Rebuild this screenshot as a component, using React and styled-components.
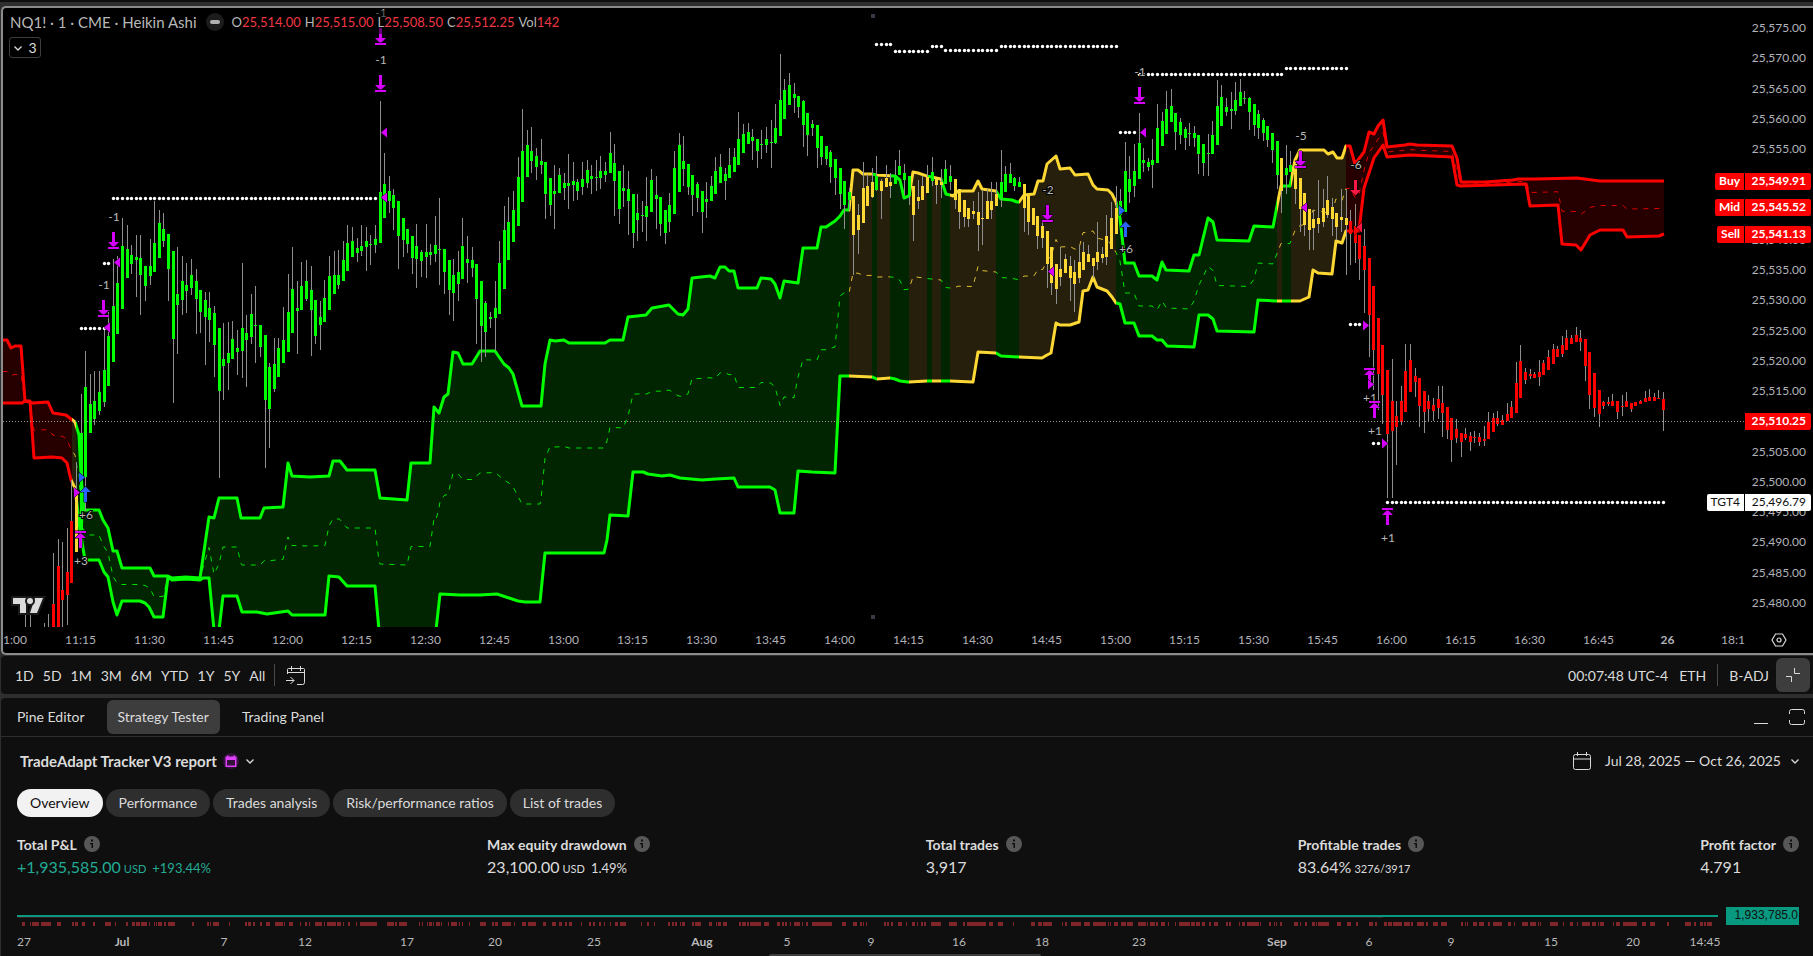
import React from 'react'
import styled, { createGlobalStyle } from 'styled-components'

const GlobalStyle = createGlobalStyle`
    * {
        box-sizing: border-box;
    }
    body {
        margin: 0;
        background: #2e2e2e;
        color: #dbdbdb;
        font-family: Lato, "Liberation Sans", sans-serif;
        font-size: 14px;
        overflow: hidden;
    }
    button {
        font: inherit;
        color: inherit;
        background: none;
        border: 0;
        padding: 0;
        cursor: pointer;
    }
`

const Page = styled.div`
    display: flex;
    flex-direction: column;
    min-height: 100vh;
`
const TopStrip = styled.div`
    height: 2px;
    background: #0f0f0f;
    margin-bottom: 4px;
`
const ChartFrame = styled.section`
    position: relative;
    display: grid;
    grid-template-columns: minmax(0, 1fr) 68px;
    grid-template-rows: 619px 26px;
    margin-left: 1px;
    border: 2px solid #8c8c8c;
    border-right: 0;
    border-radius: 5px 0 0 5px;
    background: #000;
    overflow: hidden;
`
const Plot = styled.svg`
    display: block;
    width: 100%;
    height: 100%;
    overflow: hidden;
`
const PriceAxis = styled.div`
    display: flex;
    flex-direction: column;
    justify-content: space-between;
    align-items: flex-end;
    padding: 12px 7px 16px 0;
    font-size: 12px;
    line-height: 16px;
    color: #b0b2b8;
`
const TimeAxis = styled.div`
    display: flex;
    overflow: hidden;
    font-size: 12px;
    line-height: 26px;
    color: #b0b2b8;
`
const TimeLabel = styled.span`
    flex: none;
    width: 69px;
    text-align: center;
    font-weight: ${props => props.$bold ? 700 : 400};
    &:first-child {
        margin-left: -26px;
    }
`
const AxisButton = styled.button`
    display: flex;
    align-items: center;
    justify-content: center;
`
const PriceTag = styled.div`
    position: absolute;
    right: 2px;
    top: ${props => props.$top}px;
    display: flex;
    gap: 1px;
    font-size: 12px;
    line-height: 16px;
    font-weight: ${props => props.$light ? 400 : 700};
    color: ${props => props.$light ? '#0f0f0f' : '#fff'};
    span {
        background: ${props => props.$light ? '#fff' : '#f00'};
        padding: 0 4px 1px;
        border-radius: 2px 0 0 2px;
    }
    span:last-child {
        width: 66px;
        padding: 0 5px 1px 0;
        text-align: right;
        border-radius: 0 2px 2px 0;
    }
`
const Legend = styled.div`
    position: absolute;
    left: 5px;
    top: 2px;
    display: flex;
    align-items: center;
    height: 24px;
    padding: 0 2px;
    background: rgba(0, 0, 0, 0.5);
    color: #b8b8b8;
    font-size: 13px;
`
const Symbol = styled.span`
    font-size: 15px;
`
const HideButton = styled.button`
    display: flex;
    align-items: center;
    justify-content: center;
    width: 18px;
    height: 18px;
    margin: 0 8px 0 9px;
    border-radius: 50%;
    background: #1c1c1c;
    &:before {
        content: "";
        width: 10px;
        height: 4px;
        border-radius: 2px;
        background: #b0b0b0;
    }
`
const Ohlc = styled.span`
    margin-right: 4px;
    b {
        font-weight: 400;
        color: #f23645;
    }
`
const CountButton = styled.button`
    position: absolute;
    left: 6px;
    top: 29px;
    display: flex;
    align-items: center;
    justify-content: center;
    gap: 5px;
    width: 32px;
    height: 21px;
    border: 1px solid #3d3d3d;
    border-radius: 3px;
    background: #000;
`
const Toolbar = styled.div`
    display: flex;
    align-items: center;
    justify-content: space-between;
    height: 38px;
    margin: 1px 0 4px 1px;
    padding: 0 3px 0 10px;
    border-radius: 4px 0 0 4px;
    background: #0f0f0f;
`
const ToolGroup = styled.div`
    display: flex;
    align-items: center;
    gap: ${props => props.$gap}px;
`
const ToolButton = styled.button`
    display: flex;
    align-items: center;
    height: 28px;
    padding: 0 4px;
`
const Divider = styled.i`
    width: 1px;
    height: 22px;
    margin: 0 4px;
    background: #4a4a4a;
`
const SquareButton = styled.button`
    display: flex;
    align-items: center;
    justify-content: center;
    width: 34px;
    height: 34px;
    border-radius: 6px;
    background: #3d3d3d;
`
const Panel = styled.section`
    display: flex;
    flex-direction: column;
    flex: 1;
    margin-left: 1px;
    border-radius: 4px 0 0 0;
    background: #0f0f0f;
`
const TabBar = styled.div`
    display: flex;
    align-items: center;
    height: 39px;
    padding: 0 7px 0 5px;
    gap: 11px;
    border-bottom: 1px solid #2e2e2e;
`
const Tab = styled.button`
    height: 34px;
    padding: 0 11px 2px;
    border-radius: 6px;
    background: ${props => props.$active ? '#3d3d3d' : 'none'};
`
const PanelButtons = styled.div`
    display: flex;
    gap: 18px;
    margin-left: auto;
    button {
        display: flex;
    }
`
const ReportHeader = styled.div`
    display: flex;
    align-items: center;
    justify-content: space-between;
    height: 47px;
    padding: 0 13px 0 19px;
`
const ReportButton = styled.button`
    display: flex;
    align-items: center;
    gap: 6px;
    font-size: ${props => props.$strong ? 15 : 14}px;
    font-weight: ${props => props.$strong ? 700 : 400};
`
const DateText = styled.span`
    margin: 0 3px 0 7px;
`
const Pills = styled.div`
    display: flex;
    gap: 3px;
    padding: 5px 16px 0;
`
const Pill = styled.button`
    height: 28px;
    padding: 0 13px 2px;
    border-radius: 14px;
    background: ${props => props.$active ? '#f2f2f2' : '#2e2e2e'};
    color: ${props => props.$active ? '#0f0f0f' : '#dbdbdb'};
`
const Stats = styled.div`
    display: flex;
    justify-content: space-between;
    padding: 17px 14px 0 16px;
`
const StatLabel = styled.div`
    display: flex;
    align-items: center;
    gap: 7px;
    height: 20px;
    font-weight: 700;
`
const StatValue = styled.div`
    font-size: 16px;
    line-height: 25px;
    color: ${props => props.$up ? '#22ab94' : '#dbdbdb'};
    small {
        margin-left: 3px;
        font-size: 11px;
        line-height: 1;
    }
    span {
        margin-left: 6px;
        font-size: 13px;
        line-height: 1;
    }
`
const Equity = styled.div`
    position: relative;
    margin-top: 20px;
    height: 57px;
`
const EquityTag = styled.div`
    position: absolute;
    right: 14px;
    top: 8px;
    width: 73px;
    height: 18px;
    overflow: hidden;
    background: #089981;
    color: #0f0f0f;
    font: 12px/17px "Liberation Sans", sans-serif;
    text-align: right;
    padding-right: 1px;
`
const ScrollThumb = styled.div`
    position: absolute;
    left: 768px;
    bottom: 0;
    width: 272px;
    height: 2px;
    border-radius: 2px 2px 0 0;
    background: #3d3d3d;
`

const GREEN = '#00ff00'
const YELLOW = '#fdd835'
const RED = '#ff0000'
const PINK = '#d500f9'
const BLUE = '#2962ff'
const ROSE = '#ff1744'
const FILLS = { [GREEN]: '#002500', [YELLOW]: '#261f0b', [RED]: '#260000' }

// one minute per bar, bar 0 is 11:15
const barX = i => Math.round(80.6 + 4.6 * i)

const FIRST_BAR = -12
// wick top, body top, body bottom, wick bottom
const BARS = `615,0,0,627 615,0,0,627 0,0,0,0 0,0,0,0 623,0,0,627 614,0,0,627
553,604,627,627 539,566,627,627 542,590,600,627 528,572,595,625 480,521,583,583 462,490,552,552
394,433,530,530 351,387,477,511 374,404,433,433 371,401,419,425 371,392,411,415 328,370,402,407 312,336,386,386 259,306,362,362 256,283,334,334 218,246,309,309
225,249,278,278 245,255,264,274 235,257,260,297 235,258,275,315 266,266,286,301 239,266,276,285 201,243,272,272 210,223,258,258 213,229,241,247 234,234,269,301
251,251,339,403 247,294,305,354 256,281,300,315 263,285,291,313 259,275,288,295 269,281,299,334 290,290,312,333 292,300,317,365 292,308,320,342 306,313,345,377
328,328,391,478 323,359,366,400 322,353,363,390 321,339,359,359 330,348,352,375 263,328,351,378 315,333,340,387 294,314,337,344 286,325,326,363 325,325,347,357
335,335,400,468 363,367,409,448 338,364,389,392 338,348,377,377 307,340,363,363 274,312,352,352 247,289,333,333 281,308,311,354 262,286,310,310 260,281,299,301
266,290,310,356 300,300,336,344 301,317,325,350 280,298,322,322 256,276,310,310 251,275,294,294 250,275,285,289 241,260,281,281 225,243,271,271 227,241,257,257
238,248,253,262 225,246,251,256 227,241,247,271 235,244,245,265 225,239,245,253 101,192,243,243 153,184,218,218 176,191,201,213 189,195,208,230 201,201,236,269
218,218,240,257 229,229,244,253 236,236,258,274 224,246,259,288 250,252,261,277 224,252,257,278 244,252,255,265 216,245,254,262 198,249,250,285 249,249,272,294
260,260,290,315 259,275,293,321 251,272,284,301 218,246,279,279 236,259,263,283 247,260,268,277 264,264,299,344 281,281,326,362 301,303,332,357 312,317,319,328
281,308,318,351 241,263,314,314 206,230,289,289 197,222,260,260 191,210,242,242 157,177,226,226 109,151,202,202 130,145,177,177 127,151,161,173 148,156,167,180
139,161,165,174 162,162,194,219 178,178,205,216 165,191,194,229 168,175,193,193 173,183,188,200 154,183,186,209 162,181,185,201 179,182,191,200 162,179,187,195
160,170,183,188 165,176,179,194 160,177,178,191 156,171,178,189 162,171,175,182 132,153,173,173 144,163,181,216 171,171,209,224 165,188,191,207 171,189,201,235
194,194,233,248 194,213,220,241 201,215,216,232 177,206,217,241 169,180,212,212 176,195,199,229 197,197,224,236 210,210,233,244 193,205,222,232 151,168,214,214
133,145,192,192 136,161,169,186 164,164,187,195 175,175,195,216 182,184,198,212 191,191,212,233 182,199,202,218 176,186,201,201 157,171,194,194 154,167,183,183
168,174,181,200 148,165,178,178 148,157,172,172 112,139,165,165 124,134,153,153 123,132,144,144 129,137,141,160 139,139,151,168 130,144,145,159 127,139,145,153
120,142,143,168 104,128,143,144 54,100,136,136 79,90,119,119 73,85,105,105 83,94,98,113 96,96,107,118 100,101,125,147 113,113,135,156 120,124,128,136
125,125,148,168 136,136,157,165 146,146,159,165 150,152,167,183 159,159,178,195 168,168,194,209 181,181,205,229 188,192,200,210 196,196,235,275 204,215,230,254
162,188,223,223 174,186,206,206 168,182,197,198 156,176,190,191 179,181,191,219 165,178,187,187 173,182,186,198 160,175,184,184 150,166,175,175 164,173,180,195
176,176,196,205 186,186,215,241 180,197,201,209 176,186,200,200 165,177,193,193 157,172,181,186 178,178,185,204 169,182,185,198 160,169,184,184 165,176,182,190
179,179,200,209 189,189,212,229 200,200,217,227 208,208,219,227 201,211,214,219 192,212,225,251 190,218,219,245 189,201,219,219 182,201,210,219 182,194,206,206
150,182,199,207 166,174,192,192 163,174,183,183 177,178,186,191 177,182,187,187 184,184,208,232 195,195,222,235 208,208,225,225 216,216,236,249 222,226,238,248
231,231,264,288 247,247,283,295 264,264,289,304 247,269,277,286 254,259,273,273 256,266,278,301 260,272,284,312 245,262,278,283 242,252,270,270 245,254,262,262
258,258,266,278 222,252,262,270 247,254,258,263 215,236,257,265 202,218,249,249 186,208,234,234 189,201,215,215 142,171,212,212 156,179,192,203 144,171,186,197
113,143,179,179 148,160,163,172 158,162,167,171 139,160,165,188 104,128,163,163 112,121,146,146 91,109,134,134 89,106,122,122 113,113,132,150 118,122,135,144
127,129,138,150 123,133,134,146 126,133,138,147 135,135,154,174 144,144,163,176 134,153,154,176 121,135,154,154 80,106,145,145 85,97,126,126 98,107,112,116
92,109,111,129 82,100,111,115 79,92,106,106 91,98,99,104 97,98,112,130 104,104,125,136 110,114,128,139 118,120,133,141 126,126,140,147 133,133,150,163
141,141,175,189 158,158,191,213 145,168,175,194 151,165,172,172 163,164,189,204 178,178,209,232 193,193,225,236 209,209,230,250 210,219,228,250 180,218,224,233
189,208,222,227 176,200,215,218 198,207,219,236 213,213,227,240 189,217,220,232 189,218,225,275 210,221,234,265 204,227,243,263 235,235,259,280 229,246,270,313
258,258,315,357 286,286,350,390 318,318,374,410 345,345,395,424 370,370,434,498 359,401,431,498 401,416,427,465 386,401,422,425 344,371,412,412 344,360,392,392
368,376,382,397 378,378,406,427 391,391,412,433 395,401,409,421 398,405,411,421 386,399,408,419 386,403,413,437 407,407,430,439 418,418,440,462 419,429,438,443
433,433,442,457 428,434,438,440 432,436,442,451 431,437,438,443 433,437,442,446 426,439,441,446 412,422,439,439 413,418,432,432 411,418,424,426 415,420,425,425
403,414,421,421 401,407,418,418 362,383,413,413 345,361,398,398 368,372,380,384 369,374,376,379 372,374,378,378 360,372,377,386 360,363,375,375 350,357,370,370
344,349,364,364 346,349,357,357 336,345,354,357 330,338,350,350 335,338,344,344 327,335,342,342 330,338,342,351 339,339,366,381 352,352,395,409 373,373,408,417
390,390,414,427 401,402,406,409 397,402,404,406 394,401,406,406 401,401,412,419 395,406,407,416 392,401,407,407 403,403,409,412 402,402,406,406 400,401,404,404
391,398,402,402 389,397,401,401 393,397,401,401 390,398,399,399 392,399,410,431`
    .split(/\s+/)
    .map(bar => bar.split(',').map(Number))

// bar index where each colour starts
const BAR_COLORS = [
    [-12, RED], [-1, YELLOW], [0, GREEN], [168, YELLOW], [173, GREEN], [174, YELLOW], [177, GREEN],
    [181, YELLOW], [185, GREEN], [186, YELLOW], [188, GREEN], [190, YELLOW], [200, GREEN],
    [205, YELLOW], [226, GREEN], [261, YELLOW], [262, GREEN], [264, YELLOW], [276, RED],
]
const barColor = i => BAR_COLORS.filter(([from]) => from <= i).pop()[1]

const parsePoints = text => text.trim().split(/\s+/).map(p => p.split(',').map(Number))

const LINE_A = parsePoints(`3,403 10,403 22,403 25,401 33,403 48,402 53,413 66,415 71,419 75,422 79,435 81,475 84,510 99,510
103,520 108,528 113,551 117,551 122,568 150,568 154,576 168,576 172,578 186,577 200,578 209,517 214,518 219,498 237,498 241,518
260,518 264,508 283,507 288,463 292,476 310,477 329,476 333,461 340,461 347,470 375,470 380,498 407,500 411,463 430,463 434,407 439,413
444,397 448,394 453,352 458,353 463,364 472,364 480,351 495,351 504,364 509,368 513,374 522,406 541,406 545,364 550,340
555,341 564,340 569,343 605,343 610,340 623,340 628,317 646,315 652,308 669,305 678,314 683,315 688,309 692,278 710,276
715,278 720,267 725,267 729,271 734,271 738,288 757,288 761,278 771,279 775,284 780,298 784,281 798,283 803,248 817,248
821,227 826,227 835,221 840,216 844,210 849,210 853,170 858,170 863,174 872,174 877,175 895,176 900,180 904,198 909,196
913,172 918,173 927,176 941,179 946,194 950,195 953,196 958,191 973,191 978,181 982,189 996,191 1001,199 1012,200
1017,202 1019,202 1024,195 1034,194 1038,181 1043,181 1047,164 1056,156 1060,169 1070,168 1075,175 1088,174 1093,185
1097,189 1108,190 1112,194 1116,202 1120,218 1125,263 1134,263 1139,276 1152,276 1157,280 1162,262 1166,270 1189,271
1194,255 1199,255 1208,218 1213,222 1217,240 1249,241 1254,226 1273,227 1277,206 1281,186 1290,186 1295,160 1300,150
1324,150 1328,154 1333,152 1337,158 1342,158 1346,146 1350,146 1355,164 1364,152 1369,132 1374,134 1378,126 1383,120
1387,147 1405,145 1410,144 1417,145 1452,146 1457,158 1461,182 1485,182 1513,180 1518,179 1536,179 1577,178 1600,181 1664,181`)

const LINE_B = parsePoints(`3,340 7,340 11,348 15,346 21,346 25,401 30,401 34,458 52,457 62,458 67,463 71,480 75,488 80,530 85,560
99,560 104,572 108,577 113,602 117,615 122,601 140,601 145,603 149,607 154,617 163,617 168,577 172,580 186,579 200,580 203,578 209,578 214,630
219,630 223,596 237,596 242,612 257,612 267,614 288,611 292,615 325,615 329,576 339,577 347,586 375,586 379,630
436,630 440,594 460,595 480,595 497,594 518,601 525,602 540,602 545,553 604,553 607,540 610,515 628,516 633,472 643,472
648,474 662,476 670,475 680,478 702,480 716,479 734,478 738,487 770,487 775,490 780,513 794,513 798,471 812,472 835,473
840,376 849,376 872,377 877,379 890,378 895,379 900,381 908,382 927,381 950,381 973,382 978,352 996,353 1001,356
1019,357 1042,358 1047,355 1051,353 1056,323 1060,325 1070,325 1079,322 1083,291 1088,290 1093,277 1097,287 1107,291
1112,297 1116,303 1120,304 1125,323 1134,323 1139,336 1152,336 1157,340 1162,340 1167,346 1194,347 1199,315 1208,315
1213,319 1217,331 1254,332 1258,300 1277,301 1291,301 1300,301 1309,297 1313,270 1318,273 1332,274 1336,241 1342,243
1346,231 1359,231 1364,188 1369,173 1374,158 1383,145 1387,157 1410,155 1452,157 1457,185 1461,186 1526,184 1530,206
1558,205 1562,244 1576,245 1581,250 1590,235 1600,230 1623,230 1627,237 1659,236 1664,234`)

const valueAt = (line, x) => {
    const k = Math.max(1, line.findIndex(p => p[0] >= x))
    const [x0, y0] = line[k - 1]
    const [x1, y1] = line[k]
    return y0 + (y1 - y0) * (x - x0) / (x1 - x0)
}
const MIDDLE = [...new Set([...LINE_A, ...LINE_B].map(p => p[0]))]
    .sort((a, b) => a - b)
    .map(x => [x, (valueAt(LINE_A, x) + valueAt(LINE_B, x)) / 2])

const ZONES = [
    [3, 72, RED], [72, 76, YELLOW], [76, 849, GREEN], [849, 872, YELLOW], [872, 877, GREEN],
    [877, 890, YELLOW], [890, 909, GREEN], [909, 927, YELLOW], [927, 932, GREEN], [932, 941, YELLOW],
    [941, 950, GREEN], [950, 996, YELLOW], [996, 1019, GREEN], [1019, 1116, YELLOW],
    [1116, 1277, GREEN], [1277, 1282, YELLOW], [1282, 1291, GREEN], [1291, 1346, YELLOW], [1346, 1665, RED],
]

// first bar, last bar, y
const DOT_ROWS = [
    [7, 64, 198], [5, 6, 263], [0, 5, 328], [173, 176, 44], [177, 184, 51], [185, 187, 46], [188, 199, 50],
    [200, 225, 46], [230, 261, 74], [262, 275, 68], [226, 229, 132], [276, 278, 324], [281, 282, 443], [284, 344, 502],
]

// x, y, direction, colour, has bar, label, label y
const ARROWS = [
    [380, 28, 'down', PINK, true, '-1', 13], [380, 75, 'down', PINK, true, '-1', 60],
    [113, 232, 'down', PINK, true, '-1', 217], [103, 300, 'down', PINK, true, '-1', 285],
    [1139, 87, 'down', PINK, true, '-1', 72], [1047, 205, 'down', PINK, true, '-2', 190],
    [1300, 151, 'down', PINK, true, '-5', 136], [1355, 180, 'down', ROSE, false, '-6', 165],
    [80, 531, 'up', PINK, true, '+3', 561], [85, 485, 'up', BLUE, false, '+6', 515],
    [1125, 220, 'up', BLUE, false, '+6', 249], [1369, 368, 'up', PINK, true, '+1', 398],
    [1374, 401, 'up', PINK, true, '+1', 431], [1387, 508, 'up', PINK, true, '+1', 538],
]

// tip x, y, direction, colour
const MARKS = [
    [381, 132, 1, PINK], [381, 197, 1, PINK], [114, 262, 1, PINK], [104, 327, 1, PINK], [1140, 132, 1, PINK],
    [1048, 271, 1, PINK], [1301, 207, 1, PINK], [1356, 227, 1, ROSE], [80, 492, -1, PINK],
    [1369, 325, -1, PINK], [1374, 384, -1, PINK], [1388, 443, -1, PINK], [85, 477, -1, BLUE],
    [1125, 210, -1, BLUE], [1360, 230, -1, RED],
]

const toPoints = list => list.map(p => p.join(',')).join(' ')

function Bands() {
    const area = toPoints([...LINE_A, ...[...LINE_B].reverse()])
    return ZONES.map(([from, to, color]) => (
        <g key={from} clipPath={`url(#zone${from})`} fill="none" stroke={color} strokeLinejoin="round">
            <clipPath id={`zone${from}`}>
                <rect x={from} y="8" width={to - from} height="619" />
            </clipPath>
            <polygon points={area} fill={FILLS[color]} stroke="none" />
            <polyline points={toPoints(MIDDLE)} strokeDasharray="5 6" opacity="0.85" />
            <polyline points={toPoints(LINE_A)} strokeWidth="3" />
            <polyline points={toPoints(LINE_B)} strokeWidth="3" />
        </g>
    ))
}

function Candles() {
    return BARS.map(([high, top, bottom, low], k) => {
        const i = k + FIRST_BAR
        const x = barX(i)
        if (!low) return null
        return (
            <g key={i} shapeRendering="crispEdges">
                <rect x={x} y={high} width="1" height={low - high} fill="#8f8f8f" />
                {bottom > 0 && <rect x={x - 1} y={top} width="3" height={bottom - top} fill={barColor(i)} />}
            </g>
        )
    })
}

function Dots() {
    return DOT_ROWS.map(([from, to, y]) => (
        <g key={`${from}-${y}`} fill="#fff">
            {Array.from({ length: to - from + 1 }, (_, k) => (
                <circle key={k} cx={barX(from + k) + 0.5} cy={y + 0.5} r="1.7" />
            ))}
        </g>
    ))
}

const TradeText = styled.text`
    font-size: 12px;
    fill: #b8b8b8;
    stroke: #000;
    stroke-width: 2px;
    paint-order: stroke;
    text-anchor: middle;
`

function Trades() {
    return (
        <g>
            {ARROWS.map(([x, y, dir, color, bar, label, labelY]) => (
                <g key={`${x}-${y}`}>
                    <g transform={dir === 'up' ? `translate(${x} ${y + 17}) scale(1 -1)` : `translate(${x} ${y})`} stroke="#000" paintOrder="stroke">
                        <path d="M-1 0H2V10H6L.5 15.500L-5 10H-1Z" fill={color} />
                        {bar && <rect x="-5" y="15" width="11" height="2" fill={color} />}
                    </g>
                    <TradeText x={x + 1} y={labelY + 4}>{label}</TradeText>
                </g>
            ))}
            {MARKS.map(([x, y, dir, color]) => (
                <path key={`${x}-${y}`} d={`M${x} ${y + 0.5}l${6 * dir} -5v10z`} fill={color} stroke="#000" paintOrder="stroke" />
            ))}
        </g>
    )
}

function Chart() {
    return (
        <Plot viewBox="3 8 1742 619" preserveAspectRatio="xMaxYMin slice" role="img" aria-label="Price chart">
            <rect x="871" y="14" width="4" height="4" fill="#363a45" />
            <rect x="871" y="615" width="4" height="4" fill="#363a45" />
            <Bands />
            <Candles />
            <path d="M3 421.5H1745" stroke="#9a9a9a" strokeDasharray="1 2" />
            <Dots />
            <Trades />
            <g fill="#dbdbdb" stroke="#1a1a1a" strokeWidth="4" paintOrder="stroke">
                <path d="M13 598H26V613H20V604H13Z" />
                <path d="M35 598H43L37 613H30Z" />
                <circle cx="30" cy="601" r="3" />
            </g>
        </Plot>
    )
}

const Icon = ({ size = 18, children, ...rest }) => (
    <svg width={size} height={size} viewBox={`0 0 ${size} ${size}`} fill="none" stroke="#dbdbdb" aria-hidden="true" {...rest}>
        {children}
    </svg>
)
const Chevron = () => <Icon size={10}><path d="M1.500 3.500L5 7L8.500 3.500" strokeWidth="1.3" /></Icon>
const InfoIcon = () => (
    <Icon size={16} stroke="none">
        <circle cx="8" cy="8" r="8" fill="#575757" />
        <path d="M7 3.500H9V5.500H7ZM6 7H9V12H7.500V8.200H6Z" fill="#0f0f0f" />
    </Icon>
)

const PRICES = Array.from({ length: 20 }, (_, i) => `25,${575 - i * 5}.00`)
const TIMES = [
    ...Array.from({ length: 24 }, (_, i) => `${11 + Math.floor(i / 4)}:${['00', '15', '30', '45'][i % 4]}`),
    '26',
    '18:15',
]
const TAGS = [
    { name: 'Buy', price: '25,549.91', top: 165 },
    { name: 'Mid', price: '25,545.52', top: 191 },
    { name: 'Sell', price: '25,541.13', top: 218 },
    { price: '25,510.25', top: 405 },
    { name: 'TGT4', price: '25,496.79', top: 486, light: true },
]
const QUOTES = [['O', '25,514.00'], ['H', '25,515.00'], ['L', '25,508.50'], ['C', '25,512.25'], ['Vol', '142']]
const RANGES = ['1D', '5D', '1M', '3M', '6M', 'YTD', '1Y', '5Y', 'All']
const TABS = ['Pine Editor', 'Strategy Tester', 'Trading Panel']
const REPORTS = ['Overview', 'Performance', 'Trades analysis', 'Risk/performance ratios', 'List of trades']
const STATS = [
    { label: 'Total P&L', value: '+1,935,585.00', unit: 'USD', extra: '+193.44%', up: true },
    { label: 'Max equity drawdown', value: '23,100.00', unit: 'USD', extra: '1.49%' },
    { label: 'Total trades', value: '3,917' },
    { label: 'Profitable trades', value: '83.64%', unit: '3276/3917' },
    { label: 'Profit factor', value: '4.791' },
]
const DATES = [
    [24, '27'], [122, 'Jul'], [224, '7'], [305, '12'], [407, '17'], [495, '20'], [594, '25'], [702, 'Aug'], [787, '5'], [871, '9'],
    [959, '16'], [1042, '18'], [1139, '23'], [1277, 'Sep'], [1369, '6'], [1451, '9'], [1551, '15'], [1633, '20'], [1705, '14:45'],
]
// x,width of every drawdown mark
const DRAWDOWNS = parsePoints(`22,3 30,1 32,7 41,10 57,4 72,2 75,3 82,3 93,2 105,6 115,1 126,2 132,3 136,4 141,6 149,1 154,1 156,1
158,4 164,2 168,7 192,2 207,2 210,1 213,6 229,1 245,2 248,3 253,2 260,2 266,4 275,8 284,1 289,4 300,1 305,2 309,1 315,7 324,1
327,9 337,4 343,1 348,2 356,1 360,17 387,7 395,2 399,8 419,1 422,1 427,1 429,3 433,1 436,4 441,1 448,1 451,6 459,1 462,1 469,1
480,6 492,2 495,3 502,9 514,1 522,4 528,8 543,3 552,4 559,3 565,2 569,3 581,1 589,2 593,2 599,2 604,1 610,1 615,3 620,6 641,1
647,2 654,1 668,2 672,2 675,2 680,1 682,3 692,2 695,6 709,3 716,1 718,3 723,4 739,2 742,4 747,2 750,11 764,5 777,3 782,2 785,2
790,1 794,6 802,1 806,2 812,20 842,4 853,4 860,2 863,1 866,1 884,2 887,2 891,2 898,4 906,1 912,3 917,1 921,2 924,2 931,10 949,8
963,2 967,19 989,4 998,5 1013,1 1031,4 1038,4 1043,9 1062,1 1065,2 1071,10 1084,6 1093,13 1108,1 1110,1 1114,4 1121,5 1127,6
1138,8 1147,1 1150,5 1156,2 1161,4 1168,1 1175,1 1179,11 1191,4 1196,4 1202,3 1209,2 1214,4 1226,2 1229,2 1239,1 1242,3 1247,12
1260,1 1269,2 1274,1 1276,1 1280,2 1294,4 1300,1 1305,2 1312,3 1316,1 1318,11 1337,4 1347,4 1356,2 1369,4 1375,2 1384,3 1388,4
1393,9 1404,6 1411,2 1417,7 1426,2 1433,5 1441,6 1461,2 1465,1 1467,1 1473,4 1479,5 1488,2 1493,9 1508,3 1514,1 1522,6 1530,6
1538,1 1540,1 1550,8 1563,1 1570,3 1577,1 1582,8 1592,4 1598,1 1600,4 1613,1 1616,4 1623,14 1642,4 1650,5 1667,2 1685,6 1694,2
1700,3 1704,2 1707,5`)

const DateLabel = styled.text`
    font-size: 12px;
    font-weight: ${props => props.$bold ? 700 : 400};
    fill: #b8b8b8;
    text-anchor: middle;
`

function EquityChart() {
    return (
        <Equity>
            <Plot viewBox="1 899 1812 57" preserveAspectRatio="xMinYMin slice" role="img" aria-label="Equity">
                <rect x="17" y="917" width="1366" height="1" fill="#3d1c20" />
                <rect x="17" y="915" width="1701" height="2" fill="#089981" />
                {DRAWDOWNS.map(([x, width]) => (
                    <rect key={x} x={x} y="922" width={width} height="4" fill="#80252a" />
                ))}
                {DATES.map(([x, text]) => (
                    <DateLabel key={x} x={x} y="946" $bold={/^[A-Z]/.test(text)}>{text}</DateLabel>
                ))}
            </Plot>
            <EquityTag>1,933,785.0</EquityTag>
            <ScrollThumb />
        </Equity>
    )
}

export default function App() {
    return (
        <Page>
            <GlobalStyle />
            <TopStrip />
            <ChartFrame>
                <Chart />
                <PriceAxis>
                    {PRICES.map(price => <span key={price}>{price}</span>)}
                </PriceAxis>
                <TimeAxis>
                    {TIMES.map(time => <TimeLabel key={time} $bold={time === '26'}>{time}</TimeLabel>)}
                </TimeAxis>
                <AxisButton aria-label="Axis settings">
                    <Icon size={16}>
                        <path d="M4.500 2H11.500L15 8L11.500 14H4.500L1 8Z" strokeWidth="1.2" />
                        <circle cx="8" cy="8" r="2" strokeWidth="1.2" />
                    </Icon>
                </AxisButton>
                <Legend>
                    <Symbol>NQ1! · 1 · CME · Heikin Ashi</Symbol>
                    <HideButton aria-label="Hide" />
                    {QUOTES.map(([name, value]) => <Ohlc key={name}>{name}<b>{value}</b></Ohlc>)}
                </Legend>
                <CountButton><Chevron />3</CountButton>
                {TAGS.map(tag => (
                    <PriceTag key={tag.price} $top={tag.top} $light={tag.light}>
                        {tag.name && <span>{tag.name}</span>}
                        <span>{tag.price}</span>
                    </PriceTag>
                ))}
            </ChartFrame>

            <Toolbar>
                <ToolGroup $gap={1}>
                    {RANGES.map(range => <ToolButton key={range}>{range}</ToolButton>)}
                    <Divider />
                    <ToolButton aria-label="Go to date">
                        <Icon size={22}>
                            <path d="M3.500 10V5.500A1 1 0 0 1 4.500 4.500H19.500A1 1 0 0 1 20.500 5.500V18.500A2 2 0 0 1 18.500 20.500H13M3.500 8.500H20.500M7.500 2V7M16.500 2V7M2 16.500H10M6.500 13L10 16.500L6.500 20" />
                        </Icon>
                    </ToolButton>
                </ToolGroup>
                <ToolGroup $gap={3}>
                    <ToolButton>00:07:48 UTC-4</ToolButton>
                    <ToolButton>ETH</ToolButton>
                    <Divider />
                    <ToolButton>B-ADJ</ToolButton>
                    <SquareButton aria-label="Restore chart">
                        <Icon size={18}>
                            <path d="M10.500 2V7.500H16M2 10.500H7.500V16" />
                        </Icon>
                    </SquareButton>
                </ToolGroup>
            </Toolbar>

            <Panel>
                <TabBar>
                    {TABS.map(tab => <Tab key={tab} $active={tab === 'Strategy Tester'}>{tab}</Tab>)}
                    <PanelButtons>
                        <button aria-label="Minimize">
                            <Icon><path d="M2 15.500H16" /></Icon>
                        </button>
                        <button aria-label="Maximize">
                            <Icon><path d="M1.500 6V3.500A2 2 0 0 1 3.500 1.500H14.500A2 2 0 0 1 16.500 3.500V6M1.500 12V14.500A2 2 0 0 0 3.500 16.500H14.500A2 2 0 0 0 16.500 14.500V12" /></Icon>
                        </button>
                    </PanelButtons>
                </TabBar>
                <ReportHeader>
                    <ReportButton $strong>
                        TradeAdapt Tracker V3 report
                        <Icon size={16} stroke="none">
                            <circle cx="8" cy="8" r="8" fill="#33123b" />
                            <path d="M4 2.500H5.500V3.500H10.500V2.500H12V3.500H13.500V14H2.500V3.500H4ZM4 7V12.500H12V7Z" fill="#e040fb" fillRule="evenodd" />
                        </Icon>
                        <Chevron />
                    </ReportButton>
                    <ReportButton>
                        <Icon size={20}>
                            <path d="M1.500 5.500A2 2 0 0 1 3.500 3.500H16.500A2 2 0 0 1 18.500 5.500V16.500A2 2 0 0 1 16.500 18.500H3.500A2 2 0 0 1 1.500 16.500ZM1.500 8H18.500M5.500 1V5M14.500 1V5" />
                        </Icon>
                        <DateText>Jul 28, 2025 — Oct 26, 2025</DateText>
                        <Chevron />
                    </ReportButton>
                </ReportHeader>
                <Pills>
                    {REPORTS.map(name => <Pill key={name} $active={name === 'Overview'}>{name}</Pill>)}
                </Pills>
                <Stats>
                    {STATS.map(stat => (
                        <div key={stat.label}>
                            <StatLabel>{stat.label}<InfoIcon /></StatLabel>
                            <StatValue $up={stat.up}>
                                {stat.value}
                                {stat.unit && <small>{stat.unit}</small>}
                                {stat.extra && <span>{stat.extra}</span>}
                            </StatValue>
                        </div>
                    ))}
                </Stats>
                <EquityChart />
            </Panel>
        </Page>
    )
}
